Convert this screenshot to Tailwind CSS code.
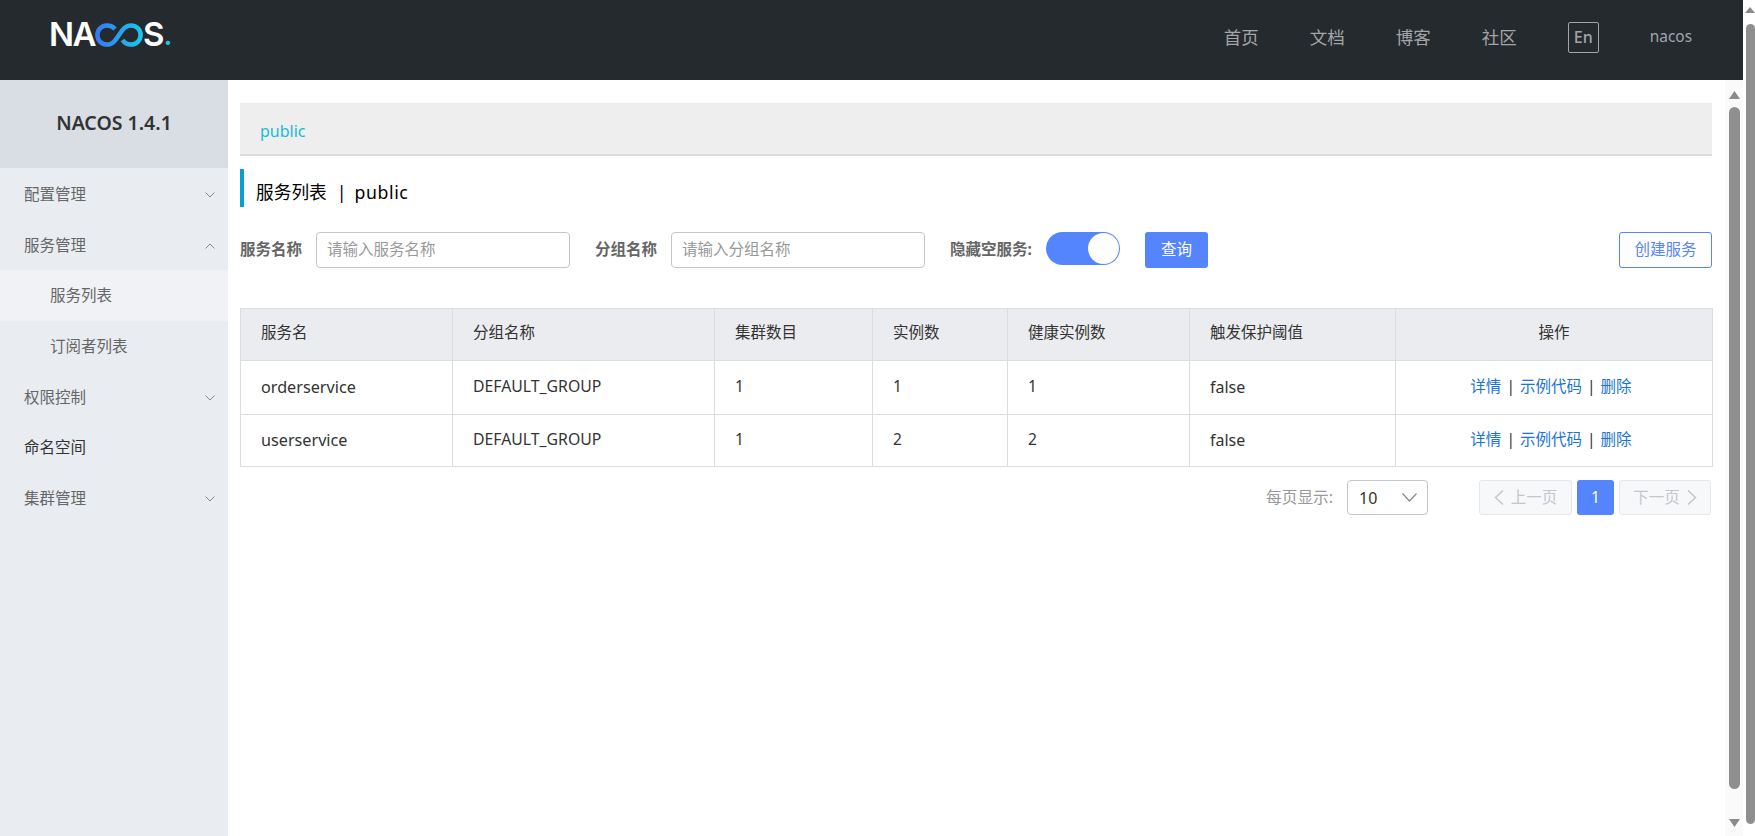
<!DOCTYPE html>
<html lang="zh-CN">
	<head>
		<meta charset="UTF-8" />
		<meta name="viewport" content="width=device-width, initial-scale=1.0" />
		<title>Nacos</title>
		<script src="https://cdn.jsdelivr.net/npm/@tailwindcss/browser@4"></script>
	</head>
	<body class="h-screen overflow-hidden bg-white flex font-['Noto_Sans','Noto_Sans_CJK_SC',sans-serif] text-[#333]">
		<div class="flex-1 min-w-0 flex flex-col">
			<!-- top bar -->
			<header class="h-[80px] shrink-0 bg-[#252a2f] flex items-center justify-between pl-[49px] pr-[51px] pb-[6px]">
				<div class="flex items-center h-[24px] mb-[5px] text-white font-['Inter',sans-serif] font-semibold text-[33px] leading-none">
					<span class="tracking-[-1.500px]">NA</span>
					<svg class="w-[48px] h-[24px] shrink-0" viewBox="0 0 48 24" fill="none">
						<defs>
							<linearGradient id="logo-grad" x1="0" y1="0" x2="48" y2="0" gradientUnits="userSpaceOnUse">
								<stop offset="0" stop-color="#3577f5" />
								<stop offset="1" stop-color="#1cc8ea" />
							</linearGradient>
						</defs>
						<path d="M20 6C18 3.500 15 2.400 12 2.400A9.600 9.600 0 0 0 12 21.600C18 21.600 21 16.500 24 12C27 7.500 30 2.400 36 2.400A9.600 9.600 0 0 1 36 21.600C32.500 21.600 29.500 20 27.500 17" stroke="url(#logo-grad)" stroke-width="4.500" />
					</svg>
					<span class="tracking-[-1px]">S</span><span class="text-[#1cc8ea] text-[28px] self-end leading-[24px]">.</span>
				</div>
				<nav class="flex items-center text-[#a3a5a7] text-[17.500px]">
					<a class="w-[86px]">首页</a>
					<a class="w-[86px]">文档</a>
					<a class="w-[86px]">博客</a>
					<a class="w-[86px]">社区</a>
					<span class="w-[31px] h-[31px] border border-[#a3a5a7] rounded-[2px] flex items-center justify-center text-[16px] font-medium">En</span>
					<span class="ml-[51px] text-[15.400px]">nacos</span>
				</nav>
			</header>

			<div class="flex-1 min-h-0 flex">
				<!-- side menu -->
				<aside class="w-[228px] shrink-0 bg-[#e9ecf1] text-[15.500px] text-[#666]">
					<div class="h-[88px] bg-[#d9dee5] flex items-center justify-center pb-[2px] text-[19.500px] font-semibold text-[#333]">NACOS 1.4.1</div>
					<div class="h-[51px] mt-[1px] pt-[1px] flex items-center justify-between pl-[24px] pr-[13px]">
						<span>配置管理</span>
						<svg class="w-[10px] h-[6px]" viewBox="0 0 10 6" fill="none" stroke="#888" stroke-width="1"><path d="M.5.5 5 5 9.500 .5" /></svg>
					</div>
					<div class="h-[50px] pt-[1px] flex items-center justify-between pl-[24px] pr-[13px]">
						<span>服务管理</span>
						<svg class="w-[10px] h-[6px]" viewBox="0 0 10 6" fill="none" stroke="#888" stroke-width="1"><path d="M.5 5.500 5 1 9.500 5.500" /></svg>
					</div>
					<div class="h-[51px] pt-[1px] bg-[#f0f2f6] flex items-center pl-[50px]">服务列表</div>
					<div class="h-[51px] pt-[1px] flex items-center pl-[50px]">订阅者列表</div>
					<div class="h-[50px] pt-[1px] flex items-center justify-between pl-[24px] pr-[13px]">
						<span>权限控制</span>
						<svg class="w-[10px] h-[6px]" viewBox="0 0 10 6" fill="none" stroke="#888" stroke-width="1"><path d="M.5.5 5 5 9.500 .5" /></svg>
					</div>
					<div class="h-[51px] pt-[1px] flex items-center pl-[24px] text-[#333]">命名空间</div>
					<div class="h-[50px] pt-[1px] flex items-center justify-between pl-[24px] pr-[13px]">
						<span>集群管理</span>
						<svg class="w-[10px] h-[6px]" viewBox="0 0 10 6" fill="none" stroke="#888" stroke-width="1"><path d="M.5.5 5 5 9.500 .5" /></svg>
					</div>
				</aside>

				<!-- content -->
				<main class="flex-1 min-w-0 pl-[12px] pr-[13px] pt-[23px] text-[15.500px]">
					<div class="h-[53px] bg-[#eeeeee] border-b-2 border-[#dddddd] pl-[20px] pt-[4px] flex items-center text-[16px] text-[#1cb9d6]">public</div>
					<div class="mt-[13px] h-[38px] border-l-[4px] border-[#09a0d0] pl-[12px] pt-[9px] flex items-center text-[17.700px] text-black">
						<span>服务列表</span><span class="ml-[10px] mr-[8px]">|</span><span class="tracking-[0.600px]">public</span>
					</div>
					<form class="mt-[25px] h-[36px] flex items-center">
						<label class="w-[76px] font-bold text-[#666]">服务名称</label>
						<input type="text" placeholder="请输入服务名称" class="w-[254px] h-[36px] px-[10px] pb-[2px] text-[15.500px] border border-[#c4c6cf] rounded-[4px] placeholder:text-[#999] outline-none" />
						<label class="ml-[25px] w-[76px] font-bold text-[#666]">分组名称</label>
						<input type="text" placeholder="请输入分组名称" class="w-[254px] h-[36px] px-[10px] pb-[2px] text-[15.500px] border border-[#c4c6cf] rounded-[4px] placeholder:text-[#999] outline-none" />
						<label class="ml-[25px] w-[96px] font-bold text-[#666]">隐藏空服务:</label>
						<span class="w-[74px] h-[33px] mb-[3px] rounded-full bg-[#5584ff] flex items-center justify-end pr-[1px]">
							<span class="w-[31px] h-[31px] rounded-full bg-white"></span>
						</span>
						<button type="button" class="ml-[25px] w-[63px] h-[36px] bg-[#5584ff] rounded-[3px] text-white">查询</button>
						<button type="button" class="ml-auto w-[93px] h-[36px] border border-[#5584ff] rounded-[3px] text-[#5584ff]">创建服务</button>
					</form>

					<table class="mt-[40px] w-[1472px] table-fixed border-collapse text-[#333]">
						<colgroup>
							<col class="w-[212px]" />
							<col class="w-[262px]" />
							<col class="w-[158px]" />
							<col class="w-[135px]" />
							<col class="w-[182px]" />
							<col class="w-[206px]" />
							<col class="w-[317px]" />
						</colgroup>
						<thead>
							<tr class="h-[52px] bg-[#ebecf0] text-left font-normal">
								<th class="border border-[#dcdde1] pl-[20px] pb-[3px] font-normal">服务名</th>
								<th class="border border-[#dcdde1] pl-[20px] pb-[3px] font-normal">分组名称</th>
								<th class="border border-[#dcdde1] pl-[20px] pb-[3px] font-normal">集群数目</th>
								<th class="border border-[#dcdde1] pl-[20px] pb-[3px] font-normal">实例数</th>
								<th class="border border-[#dcdde1] pl-[20px] pb-[3px] font-normal">健康实例数</th>
								<th class="border border-[#dcdde1] pl-[20px] pb-[3px] font-normal">触发保护阈值</th>
								<th class="border border-[#dcdde1] pb-[3px] font-normal text-center">操作</th>
							</tr>
						</thead>
						<tbody>
							<tr class="h-[54px]">
								<td class="border border-[#dcdde1] pl-[20px] pb-[1px] text-[16.200px]">orderservice</td>
								<td class="border border-[#dcdde1] pl-[20px] pb-[1px] text-[15.800px]">DEFAULT_GROUP</td>
								<td class="border border-[#dcdde1] pl-[20px] pb-[1px]">1</td>
								<td class="border border-[#dcdde1] pl-[20px] pb-[1px]">1</td>
								<td class="border border-[#dcdde1] pl-[20px] pb-[1px]">1</td>
								<td class="border border-[#dcdde1] pl-[20px] pb-[1px] text-[16px]">false</td>
								<td class="border border-[#dcdde1] pb-[1px] pr-[6px] text-center"><a class="text-[#1a73d9]">详情</a> <span class="mx-[1px]">|</span> <a class="text-[#1a73d9]">示例代码</a> <span class="mx-[1px]">|</span> <a class="text-[#1a73d9]">删除</a></td>
							</tr>
							<tr class="h-[52px]">
								<td class="border border-[#dcdde1] pl-[20px] pb-[1px] text-[16.200px]">userservice</td>
								<td class="border border-[#dcdde1] pl-[20px] pb-[1px] text-[15.800px]">DEFAULT_GROUP</td>
								<td class="border border-[#dcdde1] pl-[20px] pb-[1px]">1</td>
								<td class="border border-[#dcdde1] pl-[20px] pb-[1px]">2</td>
								<td class="border border-[#dcdde1] pl-[20px] pb-[1px]">2</td>
								<td class="border border-[#dcdde1] pl-[20px] pb-[1px] text-[16px]">false</td>
								<td class="border border-[#dcdde1] pb-[1px] pr-[6px] text-center"><a class="text-[#1a73d9]">详情</a> <span class="mx-[1px]">|</span> <a class="text-[#1a73d9]">示例代码</a> <span class="mx-[1px]">|</span> <a class="text-[#1a73d9]">删除</a></td>
							</tr>
						</tbody>
					</table>

					<div class="mt-[13px] mr-[1px] flex items-center justify-end">
						<span class="text-[#999] text-[15.700px] mr-[14px]">每页显示:</span>
						<div class="w-[81px] h-[35px] border border-[#c4c6cf] rounded-[4px] flex items-center justify-between pl-[11px] pr-[10px] text-[16px]">
							<span>10</span>
							<svg class="w-[15px] h-[9px]" viewBox="0 0 15 9" fill="none" stroke="#888" stroke-width="1.200"><path d="M.5.5 7.500 8 14.500 .5" /></svg>
						</div>
						<div class="ml-[51px] w-[93px] h-[35px] border border-[#e6e7eb] bg-[#f7f8fa] rounded-[3px] flex items-center justify-center gap-[7px] text-[#c4c6cf]">
							<svg class="w-[10px] h-[15px]" viewBox="0 0 10 15" fill="none" stroke="#c4c6cf" stroke-width="1.500"><path d="M9 .5 1.500 7.500 9 14.500" /></svg>
							<span>上一页</span>
						</div>
						<div class="ml-[5px] w-[37px] h-[35px] bg-[#5584ff] rounded-[3px] flex items-center justify-center text-white">1</div>
						<div class="ml-[5px] w-[92px] h-[35px] border border-[#e6e7eb] bg-[#f7f8fa] rounded-[3px] flex items-center justify-center gap-[7px] text-[#c4c6cf]">
							<span>下一页</span>
							<svg class="w-[10px] h-[15px]" viewBox="0 0 10 15" fill="none" stroke="#c4c6cf" stroke-width="1.500"><path d="M1 .5 8.500 7.500 1 14.500" /></svg>
						</div>
					</div>
				</main>

				<!-- inner scrollbar -->
				<div class="w-[18px] shrink-0 bg-[#fafafa] flex flex-col items-center pt-[11px]">
					<svg class="w-[11px] h-[8px] shrink-0" viewBox="0 0 11 8"><path d="M5.500 0 11 8H0z" fill="#8a8a8a" /></svg>
					<div class="mt-[8px] w-[11px] h-[682px] shrink-0 rounded-full bg-[#8f8f8f]"></div>
					<svg class="mt-[30px] w-[11px] h-[8px] shrink-0" viewBox="0 0 11 8"><path d="M0 0H11L5.500 8z" fill="#8a8a8a" /></svg>
				</div>
			</div>
		</div>

		<!-- page scrollbar -->
		<div class="w-[12px] shrink-0 bg-white flex flex-col items-end pt-[7px]">
			<svg class="w-[10px] h-[6px] shrink-0" viewBox="0 0 10 6"><path d="M5 0 10 6H0z" fill="#8a8a8a" /></svg>
			<div class="mt-[11px] w-[9px] h-[800px] shrink-0 rounded-b-full rounded-t-full bg-[#8f8f8f]"></div>
		</div>
	</body>
</html>
